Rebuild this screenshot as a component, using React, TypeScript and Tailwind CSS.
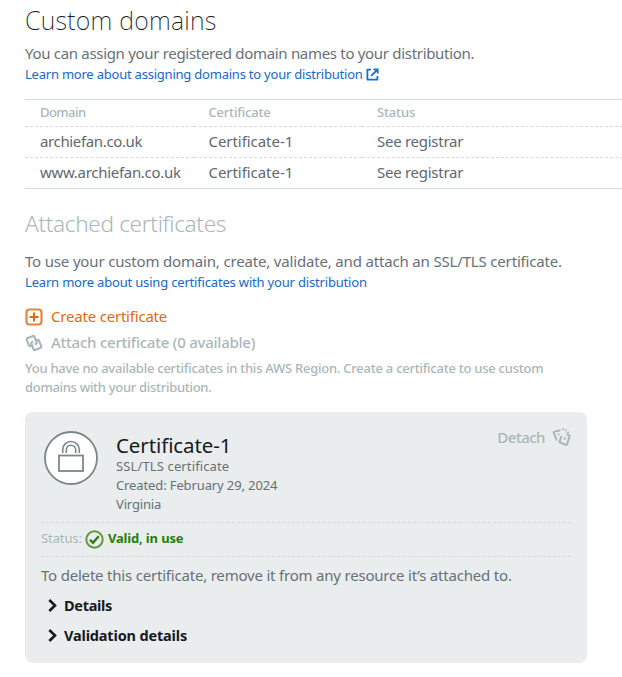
import type { ReactNode } from "react";

const domains = [
  { name: "archiefan.co.uk", tracking: "tracking-[-0.36px]" },
  { name: "www.archiefan.co.uk", tracking: "tracking-[-0.3px]" },
];

function ExternalIcon() {
  return (
    <svg width="13" height="13" viewBox="0 0 13 13" fill="none" stroke="#1670cc" strokeWidth="1.8">
      <path d="M5 1.6H1.400V11.600H11.400V8" strokeLinejoin="round" />
      <path d="M7.4 1.3h4.3v4.3M11.5 1.5L5.2 7.8" />
    </svg>
  );
}

function PlusIcon() {
  return (
    <svg width="18" height="18" viewBox="0 0 18 18" fill="none">
      <rect x="1.5" y="1.5" width="15" height="15" rx="3" stroke="#e58541" strokeWidth="2.200" />
      <path d="M9 4.6v8.8M4.6 9h8.8" stroke="#dd6b10" strokeWidth="2" />
    </svg>
  );
}

function AttachIcon() {
  return (
    <svg width="18" height="18" viewBox="0 0 18 18" fill="none" stroke="#aab7b8" strokeWidth="2.100" strokeLinejoin="round">
      <g transform="rotate(-22 9 9)">
        <path d="M6 10.500H4.500a1 1 0 0 1-1-1V3.100a1 1 0 0 1 1-1h6.200a1 1 0 0 1 1 1v6.400a1 1 0 0 1-1 1H9.200" />
        <path d="M12 7.500h1.500a1 1 0 0 1 1 1v6.400a1 1 0 0 1-1 1H7.300a1 1 0 0 1-1-1V8.500a1 1 0 0 1 1-1h1.500" />
      </g>
    </svg>
  );
}

function DetachIcon() {
  return (
    <svg width="19" height="20" viewBox="0 0 19 20" fill="none" stroke="#aab7b8" strokeWidth="2" strokeLinejoin="round">
      <path d="M8.500 3.200L2.500 4.600a1 1 0 0 0-.7 1.300L4.200 12a1 1 0 0 0 1.200.6" />
      <path d="M14.500 7.300l2.500 1a1 1 0 0 1 .6 1.300l-2.500 7.500a1 1 0 0 1-1.300.6L8.300 15.600a1 1 0 0 1-.6-1.300L9.600 9" />
      <path d="M6.300 6.600l.6 1.600M13.200 10.200l-.9 2.600" strokeWidth="1.800" />
      <path d="M10.800 1.200l.5 2M14.600 2.300l-1.300 1.900M17 5.300l-2.200.5" strokeWidth="1.500" />
    </svg>
  );
}

function LockIcon() {
  return (
    <svg width="54" height="54" viewBox="0 0 54 54" fill="none" stroke="#7b8787">
      <circle cx="27" cy="27" r="26" fill="#fff" strokeWidth="1.800" />
      <rect x="15" y="24.500" width="24" height="15.500" strokeWidth="1.800" />
      <path d="M18.700 22v-3.200a8.300 8.300 0 0 1 16.600 0V22" strokeWidth="1.600" />
      <path d="M22.300 22v-3a4.700 4.700 0 0 1 9.400 0v3" strokeWidth="1.600" />
    </svg>
  );
}

function ValidIcon() {
  return (
    <svg width="19" height="19" viewBox="0 0 19 19" fill="none">
      <circle cx="9.500" cy="9.500" r="8.200" stroke="#65983f" strokeWidth="2" />
      <path d="M5 9.700l3 3.100 5.700-6.600" stroke="#2f7a0b" strokeWidth="2.300" />
    </svg>
  );
}

function Expander({ children }: { children: ReactNode }) {
  return (
    <button className="flex h-[19px] items-center text-left font-bold leading-[19px] text-[14.5px] text-[#16191f]">
      <svg className="ml-[7px] mr-[7px]" width="9" height="13" viewBox="0 0 9 13" fill="none" stroke="#16191f" strokeWidth="2.600">
        <path d="M1.300 1l5.700 5.500L1.300 12" />
      </svg>
      {children}
    </button>
  );
}

export default function App() {
  return (
    <main className="h-[677px] w-[622px] overflow-hidden whitespace-nowrap bg-white pl-[25px] pt-[5px] font-['Noto_Sans',sans-serif] text-[15px] leading-[19px] text-[#687078]">
      <h1 className="text-[25px] font-extralight leading-[31px] tracking-[0.25px] text-[#16191f]">Custom domains</h1>
      <p className="mt-2 tracking-[-0.31px]">You can assign your registered domain names to your distribution.</p>
      <a className="mt-0.5 flex items-center text-[13px] text-[#1768c8]">
        <span className="tracking-[-0.22px]">Learn more about assigning domains to your distribution</span>
        <span className="ml-[3px]"><ExternalIcon /></span>
      </a>

      <table className="mt-[15px] w-[598px] table-fixed border-separate border-spacing-0 border-y border-[#d5dbdb] text-left">
        <thead>
          <tr className="text-[13px] leading-[25px] text-[#aab7b8]">
            <th className="h-[27px] w-[168.5px] border-b border-dashed border-[#d5dbdb] p-0 pl-[15px] pb-px font-medium tracking-[-0.55px]">Domain</th>
            <th className="w-[168.5px] border-b border-dashed border-[#d5dbdb] p-0 pl-[15px] pb-px font-medium tracking-[-0.2px]">Certificate</th>
            <th className="border-b border-dashed border-[#d5dbdb] p-0 pl-[15px] pb-px font-medium tracking-[-0.15px]">Status</th>
          </tr>
        </thead>
        <tbody className="[&>tr:first-child>td]:border-b">
          {domains.map((d) => (
            <tr key={d.name} className="leading-[29px] text-[#5f6870]">
              <td className={`border-dashed border-[#d5dbdb] p-0 pl-[15px] pb-px ${d.tracking}`}>{d.name}</td>
              <td className="border-dashed border-[#d5dbdb] p-0 pl-[15px] pb-px tracking-[-0.05px]">Certificate-1</td>
              <td className="border-dashed border-[#d5dbdb] p-0 pl-[15px] pb-px tracking-[-0.27px]">See registrar</td>
            </tr>
          ))}
        </tbody>
      </table>

      <h2 className="mt-[21px] text-[22.5px] font-light leading-[27px] tracking-[-0.3px] text-[#aab7b8]">Attached certificates</h2>
      <p className="mt-[15px] tracking-[-0.17px]">To use your custom domain, create, validate, and attach an SSL/TLS certificate.</p>
      <a className="mt-0.5 block text-[13px] tracking-[-0.18px] text-[#1768c8]">Learn more about using certificates with your distribution</a>

      <button className="mt-3 flex h-[25px] items-center gap-2 text-[#dd6b10]">
        <PlusIcon />
        <span className="tracking-[-0.2px]">Create certificate</span>
      </button>
      <button className="mt-px flex h-[25px] items-center gap-2 text-[#aab7b8]">
        <AttachIcon />
        <span className="font-medium tracking-[-0.24px]">Attach certificate (0 available)</span>
      </button>
      <p className="mt-1 text-[13px] font-medium text-[#aab7b8]">
        <span className="block tracking-[-0.25px]">You have no available certificates in this AWS Region. Create a certificate to use custom</span>
        <span className="block tracking-[-0.3px]">domains with your distribution.</span>
      </p>

      <section className="mt-[15px] h-[251px] w-[562px] rounded-lg bg-[#e9eded] px-4 pt-4">
        <div className="flex h-[94px] items-start">
          <div className="ml-[3px] mt-[3px]"><LockIcon /></div>
          <div className="ml-[18px] mt-[6px] text-[13px]">
            <h3 className="text-[20.5px] leading-[23px] tracking-[-0.1px] text-[#16191f]">Certificate-1</h3>
            <p className="tracking-[0.13px]">SSL/TLS certificate</p>
            <p className="tracking-[-0.12px]">Created: February 29, 2024</p>
            <p className="tracking-[-0.17px]">Virginia</p>
          </div>
          <button className="-mt-px ml-auto flex items-center gap-[7px] text-[#aab7b8]">
            <span className="font-medium tracking-[-0.5px]">Detach</span>
            <DetachIcon />
          </button>
        </div>
        <div className="flex h-[35px] items-center border-y border-dashed border-[#d5dbdb] text-[13px]">
          <span className="-mt-[2px] tracking-[-0.1px] text-[#aab7b8]">Status:</span>
          <span className="ml-[3px]"><ValidIcon /></span>
          <span className="-mt-[2px] ml-1 font-bold tracking-[-0.15px] text-[#2a7d08]">Valid, in use</span>
        </div>
        <p className="mt-[9px] tracking-[-0.2px]">To delete this certificate, remove it from any resource it’s attached to.</p>
        <div className="mt-[11px] flex flex-col gap-[11px]">
          <Expander><span className="tracking-[-0.3px]">Details</span></Expander>
          <Expander><span className="tracking-[-0.16px]">Validation details</span></Expander>
        </div>
      </section>
    </main>
  );
}
